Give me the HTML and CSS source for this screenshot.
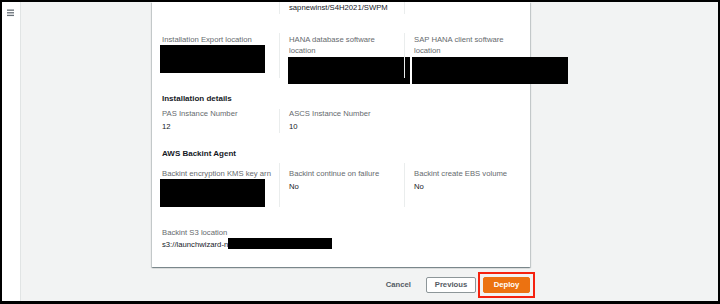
FILE: index.html
```html
<!DOCTYPE html>
<html>
<head>
  <meta charset="UTF-8">
  <title>Review and deploy</title>
  <link rel="stylesheet" href="styles.css">
</head>
<body>
  <div class="frame">
    <div class="side-nav">
      <svg class="burger" width="8" height="8" viewBox="0 0 8 8">
        <rect x="0" y="0" width="8" height="1.5" fill="#687078"/>
        <rect x="0" y="3" width="8" height="1.5" fill="#687078"/>
        <rect x="0" y="6" width="8" height="1.5" fill="#687078"/>
      </svg>
    </div>

    <div class="main">
      <div class="card">
        <!-- верхняя строка, частично прокручена -->
        <div class="kv-row row-top">
          <div class="cell"></div>
          <div class="cell">
            <div class="value">sapnewinst/S4H2021/SWPM</div>
          </div>
          <div class="cell"></div>
        </div>

        <div class="kv-row row-install">
          <div class="cell">
            <div class="label">Installation Export location</div>
            <div class="redact r-export"></div>
          </div>
          <div class="cell">
            <div class="label">HANA database software<br>location</div>
            <div class="redact r-hana"></div>
          </div>
          <div class="cell">
            <div class="label">SAP HANA client software<br>location</div>
            <div class="redact r-client"></div>
          </div>
        </div>

        <h2 class="section-title title-details">Installation details</h2>
        <div class="kv-row row-details">
          <div class="cell">
            <div class="label">PAS Instance Number</div>
            <div class="value">12</div>
          </div>
          <div class="cell">
            <div class="label">ASCS Instance Number</div>
            <div class="value">10</div>
          </div>
        </div>

        <h2 class="section-title title-backint">AWS Backint Agent</h2>
        <div class="kv-row row-backint">
          <div class="cell">
            <div class="label">Backint encryption KMS key arn</div>
            <div class="redact r-kms"></div>
          </div>
          <div class="cell">
            <div class="label">Backint continue on failure</div>
            <div class="value">No</div>
          </div>
          <div class="cell">
            <div class="label">Backint create EBS volume</div>
            <div class="value">No</div>
          </div>
        </div>

        <div class="single-field">
          <div class="label">Backint S3 location</div>
          <div class="value">s3://launchwizard-n<span class="redact-inline"></span></div>
        </div>
      </div>

      <div class="actions">
        <button class="btn-link">Cancel</button>
        <button class="btn btn-normal">Previous</button>
        <span class="highlight">
          <button class="btn btn-primary">Deploy</button>
        </span>
      </div>
    </div>
  </div>
</body>
</html>
```

FILE: styles.css
```css
/* Общие стили */
html, body {
  margin: 0;
  padding: 0;
}

body {
  font-family: "Liberation Sans", Arial, sans-serif;
  background-color: #000;
}

.frame {
  display: flex;
  width: 720px;
  height: 304px;
  box-sizing: border-box;
  border: 2px solid #000;
  border-bottom-width: 3px;
  overflow: hidden;
}

/* Боковая панель */
.side-nav {
  width: 19px;
  flex-shrink: 0;
  background-color: #fff;
  border-right: 1px solid #e1e4e4;
  padding: 7px 0 0 5px;
  box-sizing: border-box;
}

.burger {
  display: block;
  width: 7px;
  height: 8px;
}

/* Основная область */
.main {
  flex: 1;
  background-color: #f2f3f3;
  padding-left: 131px;
  overflow: hidden;
}

.card {
  width: 378px;
  box-sizing: border-box;
  background-color: #fff;
  padding: 0 10px 16px 10px;
  box-shadow: 0 1px 1px 0 rgba(0, 28, 36, 0.3), 1px 1px 1px 0 rgba(0, 28, 36, 0.15), -1px 1px 1px 0 rgba(0, 28, 36, 0.15);
}

.label {
  font-size: 7.7px;
  line-height: 10.5px;
  color: #666a6e;
}

.value {
  font-size: 7.7px;
  line-height: 12px;
  color: #16191f;
}

.section-title {
  margin: 0;
  font-size: 8px;
  line-height: 12px;
  font-weight: bold;
  color: #16191f;
}

/* Сетка ключ-значение */
.kv-row {
  display: grid;
  grid-template-columns: 117px 125px 1fr;
}

.kv-row .cell {
  position: relative;
  box-sizing: border-box;
}

.kv-row .cell + .cell {
  border-left: 1px solid #eaeded;
  padding-left: 9px;
}

.row-top {
  height: 11px;
}

.row-install {
  margin-top: 20px;
  height: 45px;
}

.row-install .cell {
  padding-top: 2px;
}

.title-details {
  margin-top: 14.5px;
}

.row-details {
  margin-top: 4.5px;
  height: 23px;
}

.row-details .label {
  line-height: 10px;
}

.row-details .value {
  margin-top: 2px;
}

.title-backint {
  margin-top: 15.5px;
}

.row-backint {
  margin-top: 3.5px;
  height: 44px;
}

.row-backint .cell {
  padding-top: 5.5px;
}

.row-backint .value {
  margin-top: 1.5px;
}

.single-field {
  margin-top: 20.5px;
}

.single-field .label {
  line-height: 10px;
}

/* Закрашенные значения */
.redact {
  position: absolute;
  background-color: #000;
}

.r-export {
  left: -2px;
  top: 12px;
  width: 105px;
  height: 28px;
}

.r-hana {
  left: 8px;
  top: 24px;
  width: 122px;
  height: 27px;
}

.r-client {
  left: 7px;
  top: 24px;
  width: 156px;
  height: 27px;
}

.r-kms {
  left: -2px;
  top: 16px;
  width: 105px;
  height: 28px;
}

.redact-inline {
  display: inline-block;
  width: 104px;
  height: 11px;
  background-color: #000;
  vertical-align: -2px;
}

/* Кнопки */
.actions {
  width: 383px;
  display: flex;
  justify-content: flex-end;
  align-items: center;
  margin-top: 5px;
}

.actions button {
  font-family: "Liberation Sans", Arial, sans-serif;
  font-size: 7.7px;
  font-weight: bold;
  height: 16px;
  padding: 0;
  cursor: pointer;
}

.btn-link {
  background: none;
  border: none;
  color: #545b64;
  margin-right: 15px;
}

.btn {
  border-radius: 2px;
  text-align: center;
  box-sizing: border-box;
}

.btn-normal {
  width: 50px;
  background-color: #fff;
  border: 1px solid #8d9699;
  color: #545b64;
}

/* Красная рамка вокруг Deploy */
.highlight {
  display: flex;
  margin-left: 2px;
  padding: 3px;
  border: 2px solid #f5220f;
}

.btn-primary {
  width: 47px;
  background-color: #ec7211;
  border: 1px solid #ec7211;
  color: #fff;
}
```
